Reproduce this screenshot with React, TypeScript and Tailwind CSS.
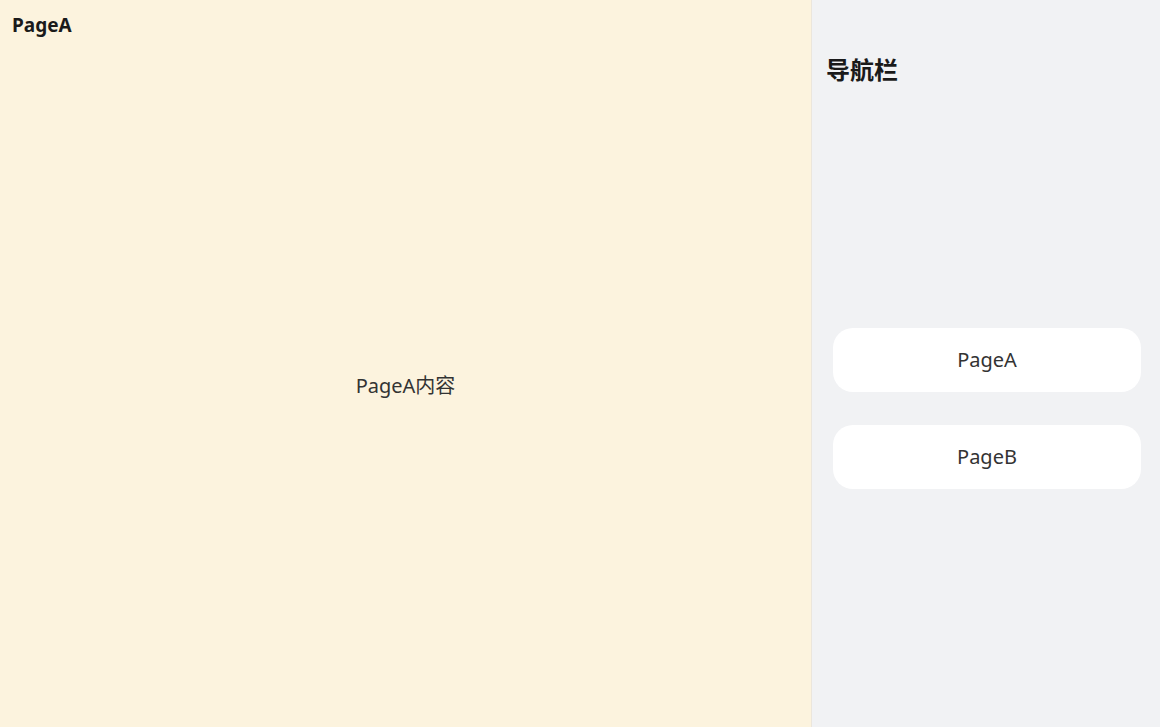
import React from "react";

export default function App() {
  const font = { fontFamily: '"Noto Sans", "Noto Sans CJK SC", sans-serif' };
  return (
    <div className="flex h-[727px] w-[1160px] overflow-hidden" style={font}>
      <div className="relative flex w-[811px] flex-col bg-[#fcf3de]">
        <div className="h-[50px] px-3 pt-[11px] text-[19px] font-bold leading-[28px] text-[#1a1a1a]">PageA</div>
        <div className="flex flex-1 items-center justify-center pb-[6px] text-[20px] text-[#333]">PageA内容</div>
      </div>
      <div className="w-px bg-[#ebe6dc]" />
      <div className="flex flex-1 flex-col bg-[#f1f2f4]">
        <div className="px-[14px] pt-[54px] text-[24px] font-bold leading-[32px] text-[#1a1a1a]">导航栏</div>
        <div className="mt-[242px] flex flex-col gap-[33px] pl-[21px] pr-[19px]">
          <div className="flex h-[64px] items-center justify-center rounded-[20px] bg-white text-[20px] text-[#333]">PageA</div>
          <div className="flex h-[64px] items-center justify-center rounded-[20px] bg-white text-[20px] text-[#333]">PageB</div>
        </div>
      </div>
    </div>
  );
}
